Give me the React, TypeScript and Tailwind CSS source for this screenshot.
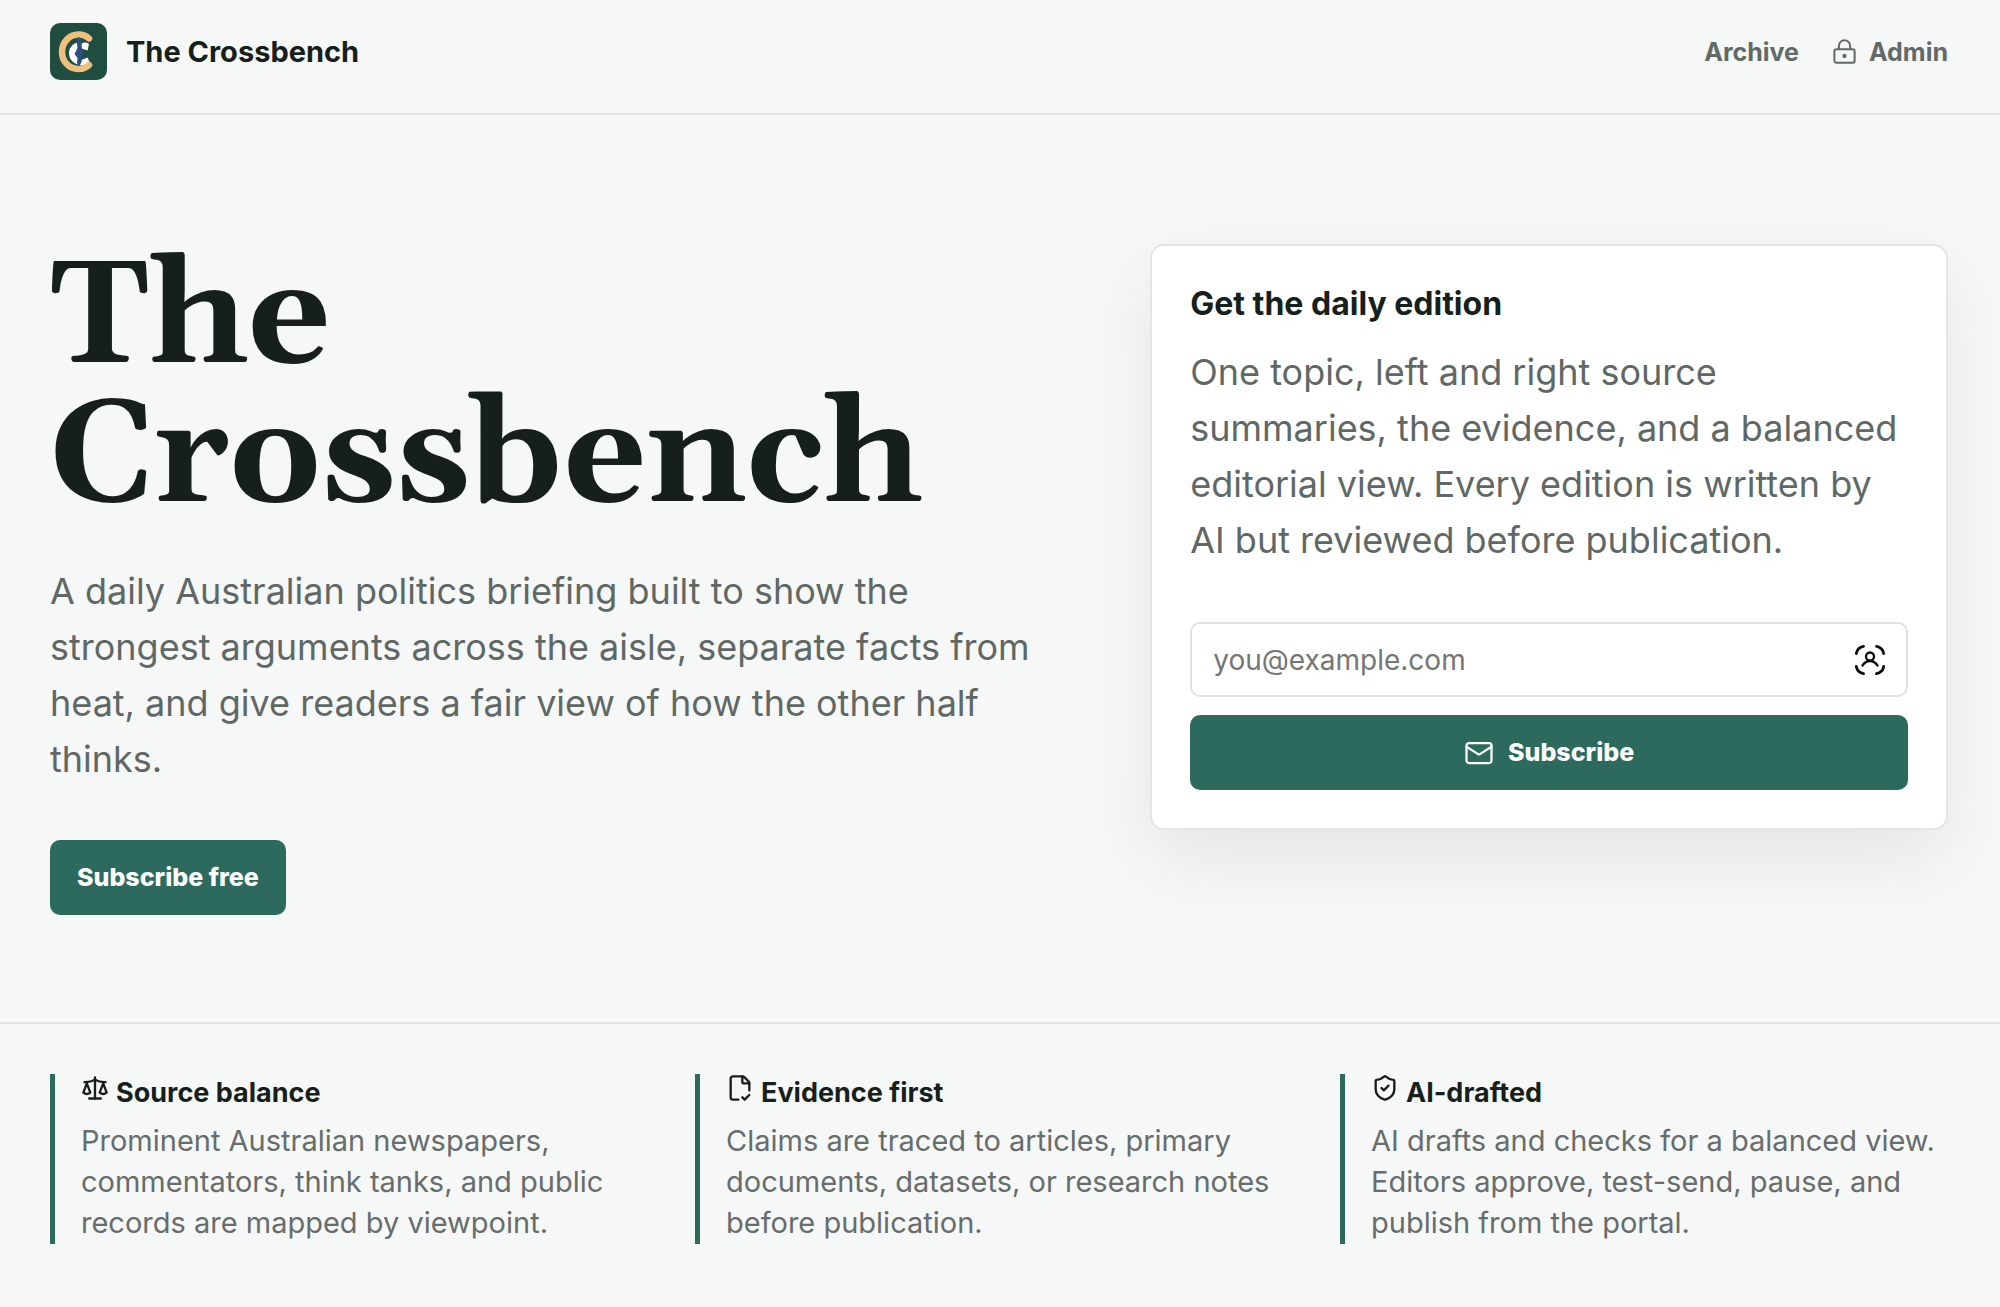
import React from "react";
import { FileCheckCorner, LockKeyhole, Mail, Scale, ShieldCheck } from "lucide-react";

function Logo() {
  return (
    <svg viewBox="0 0 57 57" className="size-[57px]" aria-hidden="true">
      <rect width="57" height="57" rx="10" fill="#1f4d40" />
      <path d="M29 19.500C23 20 19 24.500 19 30S22.500 40 28 41.500Z" fill="#ffffff" />
      <path d="M31 21C34 19 36 19 39 21L37.500 27.500L31.500 25.500Z" fill="#ffffff" />
      <path d="M31.500 37L37.500 34.500L39.500 39L34 43L30 42Z" fill="#ffffff" />
      <path d="M39 15.500C36 12.500 33 11.500 28.500 11.500C19 11.500 12 19.500 12 29S19 46 28.500 46C33 46 36.500 44.500 39 42" fill="none" stroke="#eec07c" strokeWidth="6.500" strokeLinecap="round" />
      <path d="M28.500 13.500L32 18L31.500 25L34 28.500L31.500 33V39L28.500 43.500L27 40L27.500 35L24.500 31L27.500 25L26.500 17Z" fill="#2a4f80" />
    </svg>
  );
}

function ContactIcon() {
  return (
    <svg viewBox="0 0 32 32" className="size-8" fill="none" stroke="#0b0b0b" strokeWidth="2.800" strokeLinecap="round" aria-hidden="true">
      <path d="M2.300 9.500C3 5.500 5.500 3 9.500 2.300M22.500 2.300C26.500 3 29 5.500 29.700 9.500M29.700 22.500C29 26.500 26.500 29 22.500 29.700M9.500 29.700C5.500 29 3 26.500 2.300 22.500" />
      <circle cx="16" cy="12.500" r="4" strokeWidth="2.300" />
      <path d="M8.500 21.500C10.500 18.500 13 17 16 17S21.500 18.500 23.500 21.500" strokeWidth="2.300" />
    </svg>
  );
}

const features = [
  {
    icon: Scale,
    title: "Source balance",
    text: "Prominent Australian newspapers, commentators, think tanks, and public records are mapped by viewpoint.",
  },
  {
    icon: FileCheckCorner,
    title: "Evidence first",
    text: "Claims are traced to articles, primary documents, datasets, or research notes before publication.",
  },
  {
    icon: ShieldCheck,
    title: "AI-drafted",
    text: "AI drafts and checks for a balanced view. Editors approve, test-send, pause, and publish from the portal.",
  },
];

export default function App() {
  return (
    <div className="min-h-screen bg-[#f6f7f7] font-['Inter',sans-serif] text-[#171f1c]">
      <header className="flex items-center justify-between border-b-2 border-[#dfe4e2] pt-[23px] pr-[52px] pb-[33px] pl-[50px]">
        <a href="#" className="flex items-center gap-[19px] text-[29px] leading-[40px] font-bold">
          <Logo />
          The Crossbench
        </a>
        <nav className="flex items-center gap-8 text-[25px] leading-[40px] font-bold text-[#626a67]">
          <a href="#archive">Archive</a>
          <a href="#admin" className="flex items-center gap-[11px]">
            <LockKeyhole size={27} strokeWidth={1.8} />
            Admin
          </a>
        </nav>
      </header>

      <main>
        <section className="grid grid-cols-[5fr_4fr] items-start gap-[103px] pt-[129px] pr-[52px] pb-[107px] pl-[50px]">
          <div className="pt-[6px]">
            <h1 className="font-['Gelasio','Liberation_Serif',serif] text-[145px] leading-[139px] font-bold">
              The Crossbench
            </h1>
            <p className="mt-[35px] text-[36px] leading-[56px] text-[#5f6865]">
              A daily Australian politics briefing built to show the strongest arguments across the aisle, separate facts
              from heat, and give readers a fair view of how the other half thinks.
            </p>
            <a
              href="#subscribe"
              className="mt-[53px] inline-flex h-[75px] items-center rounded-[10px] bg-[#2c6a5d] px-[27px] text-[25px] font-extrabold text-white"
            >
              Subscribe free
            </a>
          </div>

          <form
            id="subscribe"
            onSubmit={(e: React.FormEvent) => e.preventDefault()}
            className="rounded-[14px] border-2 border-[#e4e6e5] bg-white p-[38px] shadow-[0_30px_76px_rgba(0,0,0,0.07)]"
          >
            <h2 className="text-[32px] leading-[40px] font-bold">Get the daily edition</h2>
            <p className="mt-5 text-[36px] leading-[56px] text-[#5f6865]">
              One topic, left and right source summaries, the evidence, and a balanced editorial view. Every edition is
              written by AI but reviewed before publication.
            </p>
            <div className="mt-[54px] flex h-[75px] items-center rounded-[10px] border-2 border-[#e0e2e1] bg-white pr-5 pl-[21px]">
              <input
                type="email"
                aria-label="Email address"
                placeholder="you@example.com"
                className="min-w-0 flex-1 bg-transparent text-[28px] outline-none placeholder:text-[#747675]"
              />
              <button type="button" aria-label="Fill in contact">
                <ContactIcon />
              </button>
            </div>
            <button
              type="submit"
              className="mt-[18px] flex h-[75px] w-full items-center justify-center gap-[14px] rounded-[10px] bg-[#2c6a5d] text-[25px] font-extrabold text-white"
            >
              <Mail size={30} strokeWidth={1.8} />
              Subscribe
            </button>
          </form>
        </section>

        <section className="grid grid-cols-3 gap-[38px] border-t-2 border-[#dfe4e2] py-[50px] pr-[53px] pl-[50px]">
          {features.map(({ icon: Icon, title, text }) => (
            <article key={title} className="border-l-[5px] border-[#2c6a5d] pl-[26px]">
              <h3 className="flex gap-[7px] text-[27px] leading-[38px] font-bold">
                <Icon size={28} strokeWidth={2} />
                {title}
              </h3>
              <p className="mt-2 pb-px text-[29px] leading-[41px] text-[#666d6b]">{text}</p>
            </article>
          ))}
        </section>
      </main>
    </div>
  );
}
